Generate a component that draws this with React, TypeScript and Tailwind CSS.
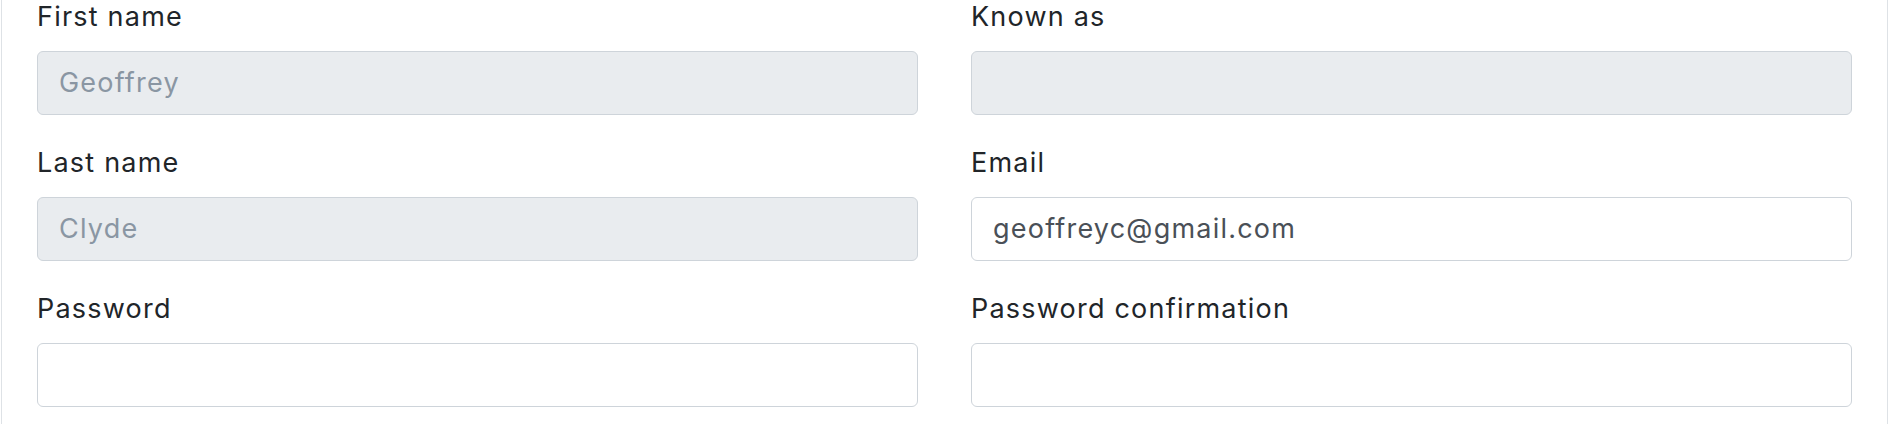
import React from 'react'

type Field = {
  label: string
  value?: string
  disabled?: boolean
}

const FIELDS: Field[] = [
  { label: 'First name', value: 'Geoffrey', disabled: true },
  { label: 'Known as', value: '', disabled: true },
  { label: 'Last name', value: 'Clyde', disabled: true },
  { label: 'Email', value: 'geoffreyc@gmail.com' },
  { label: 'Password' },
  { label: 'Password confirmation' },
]

const FormField: React.FC<{ field: Field }> = ({ field }) => {
  return (
    <div className='flex flex-col'>
      <label className='block h-[34px] text-[27px] leading-[34px] tracking-[0.045em] text-[#212529] mb-[17px]'>
        {field.label}
      </label>
      <input
        type={field.label.startsWith('Password') ? 'password' : 'text'}
        readOnly
        value={field.value ?? ''}
        className={
          field.disabled
            ? 'h-[64px] w-full rounded-[6px] border border-[#ced4da] bg-[#e9ecef] px-[21px] pb-[2px] text-[27px] tracking-[0.045em] text-[#8a96a3] outline-none'
            : 'h-[64px] w-full rounded-[6px] border border-[#ced4da] bg-white px-[21px] pb-[2px] text-[27px] tracking-[0.045em] text-[#4a5057] outline-none'
        }
      />
    </div>
  )
}

const App: React.FC = () => {
  return (
    <div className='w-[1890px] h-[424px] bg-white overflow-hidden font-["Inter","Liberation_Sans",sans-serif]'>
      <div className='ml-[1px] w-[1887px] h-full border-x border-[#dee2e6] px-[35px]'>
        <div className='grid grid-cols-2 gap-x-[53px] gap-y-[31px]'>
          {FIELDS.map((f) => (
            <FormField key={f.label} field={f} />
          ))}
        </div>
      </div>
    </div>
  )
}

export default App
